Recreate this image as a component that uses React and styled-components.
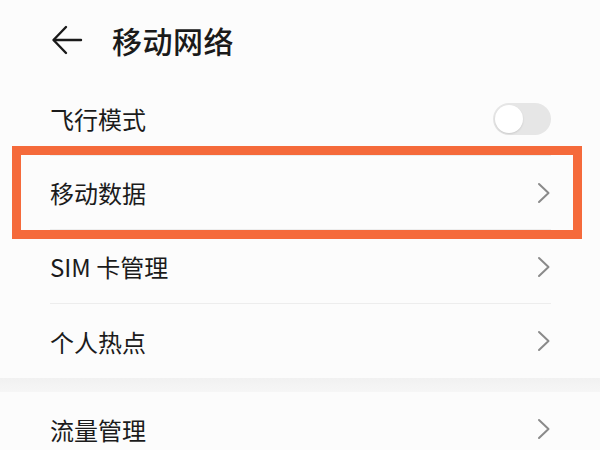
import React from 'react';
import styled, {createGlobalStyle} from 'styled-components';

const GlobalStyle = createGlobalStyle`
  html, body {
    margin: 0;
    padding: 0;
    background: #fcfcfc;
  }
  body {
    font-family: "Noto Sans CJK SC", "Noto Sans", sans-serif;
    color: #1b1b1b;
  }
`

const Page = styled.div`
  width: 600px;
  height: 450px;
  overflow: hidden;
  background: #fcfcfc;
`

const Header = styled.div`
  display: flex;
  align-items: center;
  height: 80px;
  margin-bottom: 2px;
  padding-left: 51px;
  gap: 29px;
`

const Title = styled.h1`
  margin: 0;
  font-size: 30px;
  font-weight: 500;
  letter-spacing: 0.5px;
  color: #1a1a1a;
`

const Group = styled.div`
  display: flex;
  flex-direction: column;
`

const GroupGap = styled.div`
  height: 14px;
  background: linear-gradient(#f1f1f1, #f6f6f6);
`

const Row = styled.div`
  position: relative;
  display: flex;
  align-items: center;
  justify-content: space-between;
  height: 74px;
  margin: 0 49px 0 50px;
  border-bottom: ${p => p.$divider ? '1px solid #ededed' : 'none'};
  box-sizing: border-box;

  ${p => p.$highlight && `
    &::after {
      content: "";
      position: absolute;
      top: -10px;
      bottom: -10px;
      left: -38px;
      right: -31px;
      border: 9px solid #f56a3b;
      pointer-events: none;
    }
  `}
`

const Label = styled.span`
  font-size: 24px;
  font-weight: 400;
  color: #1b1b1b;
`

const Track = styled.div`
  width: 58px;
  height: 32px;
  border-radius: 16px;
  background: #e6e6e6;
  padding: 2px;
  box-sizing: border-box;
  display: flex;
  align-items: center;
`

const Knob = styled.div`
  width: 28px;
  height: 28px;
  border-radius: 50%;
  background: #fff;
  box-shadow: 0 1px 2px rgba(0, 0, 0, 0.12);
`

const BackArrow = () => (
  <svg width="32" height="32" viewBox="0 0 32 32" fill="none" stroke="#1a1a1a"
       strokeWidth="2.4" strokeLinecap="round" strokeLinejoin="round">
    <path d="M30 16H3"/>
    <path d="M15 3L2.5 16L15 29"/>
  </svg>
)

const Chevron = () => (
  <svg width="14" height="22" viewBox="0 0 14 22" fill="none" stroke="#8a8a8a"
       strokeWidth="2" strokeLinecap="round" strokeLinejoin="round">
    <path d="M2 2L11.5 11L2 20"/>
  </svg>
)

const items = [
  {label: '移动数据', highlight: true, divider: true},
  {label: 'SIM 卡管理', divider: true},
  {label: '个人热点'},
];

export default function App() {
  return (
    <Page>
      <GlobalStyle/>
      <Header>
        <BackArrow/>
        <Title>移动网络</Title>
      </Header>
      <Group>
        <Row $divider>
          <Label>飞行模式</Label>
          <Track><Knob/></Track>
        </Row>
        {items.map(it =>
          <Row key={it.label} $highlight={it.highlight} $divider={it.divider}>
            <Label>{it.label}</Label>
            <Chevron/>
          </Row>)}
      </Group>
      <GroupGap/>
      <Group>
        <Row>
          <Label>流量管理</Label>
          <Chevron/>
        </Row>
      </Group>
    </Page>
  );
}
